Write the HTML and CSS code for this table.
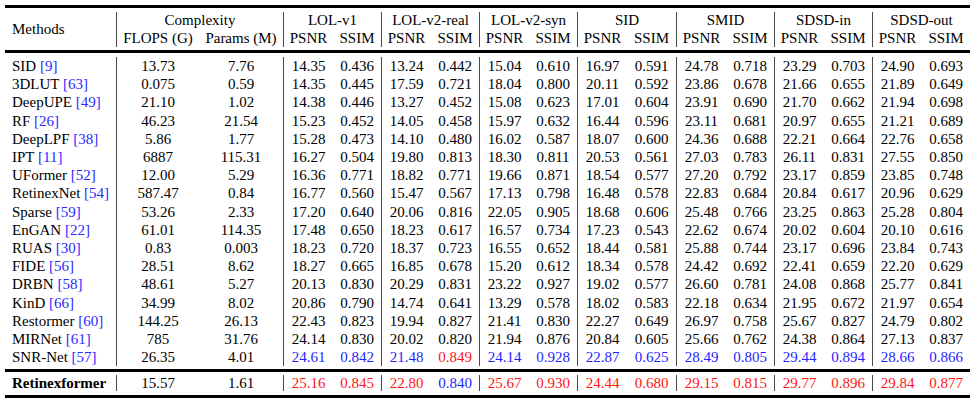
FILE: index.html
```html
<!DOCTYPE html>
<html>
<head>
<meta charset="utf-8">
<link rel="stylesheet" href="styles.css">
</head>
<body>
<table class="tbl">
<colgroup>
<col class="w-m"><col class="w-f"><col class="w-p">
<col class="w-a"><col class="w-b">
<col class="w-a"><col class="w-b">
<col class="w-a"><col class="w-b">
<col class="w-a"><col class="w-b1">
<col class="w-a"><col class="w-b">
<col class="w-a"><col class="w-b">
<col class="w-a"><col class="w-b">
</colgroup>
<tbody>
<tr class="rule"><td colspan="17"></td></tr>
<tr class="gap4"><td colspan="17"></td></tr>
<tr class="hd"><td class="m" rowspan="2">Methods</td><td class="v" colspan="2">Complexity</td><td class="v" colspan="2">LOL-v1</td><td class="v" colspan="2">LOL-v2-real</td><td class="v" colspan="2">LOL-v2-syn</td><td class="v" colspan="2">SID</td><td class="v" colspan="2">SMID</td><td class="v" colspan="2">SDSD-in</td><td class="v" colspan="2">SDSD-out</td></tr>
<tr class="hd"><td class="v">FLOPS (G)</td><td>Params (M)</td><td class="v">PSNR</td><td>SSIM</td><td class="v">PSNR</td><td>SSIM</td><td class="v">PSNR</td><td>SSIM</td><td class="v">PSNR</td><td>SSIM</td><td class="v">PSNR</td><td>SSIM</td><td class="v">PSNR</td><td>SSIM</td><td class="v">PSNR</td><td>SSIM</td></tr>
<tr class="gap3"><td colspan="17"></td></tr>
<tr class="rule"><td colspan="17"></td></tr>
<tr class="gap4"><td colspan="17"></td></tr>
<tr class="row"><td class="m">SID <span class="c">[9]</span></td><td class="v">13.73</td><td>7.76</td><td class="v">14.35</td><td>0.436</td><td class="v">13.24</td><td>0.442</td><td class="v">15.04</td><td>0.610</td><td class="v">16.97</td><td>0.591</td><td class="v">24.78</td><td>0.718</td><td class="v">23.29</td><td>0.703</td><td class="v">24.90</td><td>0.693</td></tr>
<tr class="row"><td class="m">3DLUT <span class="c">[63]</span></td><td class="v">0.075</td><td>0.59</td><td class="v">14.35</td><td>0.445</td><td class="v">17.59</td><td>0.721</td><td class="v">18.04</td><td>0.800</td><td class="v">20.11</td><td>0.592</td><td class="v">23.86</td><td>0.678</td><td class="v">21.66</td><td>0.655</td><td class="v">21.89</td><td>0.649</td></tr>
<tr class="row"><td class="m">DeepUPE <span class="c">[49]</span></td><td class="v">21.10</td><td>1.02</td><td class="v">14.38</td><td>0.446</td><td class="v">13.27</td><td>0.452</td><td class="v">15.08</td><td>0.623</td><td class="v">17.01</td><td>0.604</td><td class="v">23.91</td><td>0.690</td><td class="v">21.70</td><td>0.662</td><td class="v">21.94</td><td>0.698</td></tr>
<tr class="row"><td class="m">RF <span class="c">[26]</span></td><td class="v">46.23</td><td>21.54</td><td class="v">15.23</td><td>0.452</td><td class="v">14.05</td><td>0.458</td><td class="v">15.97</td><td>0.632</td><td class="v">16.44</td><td>0.596</td><td class="v">23.11</td><td>0.681</td><td class="v">20.97</td><td>0.655</td><td class="v">21.21</td><td>0.689</td></tr>
<tr class="row"><td class="m">DeepLPF <span class="c">[38]</span></td><td class="v">5.86</td><td>1.77</td><td class="v">15.28</td><td>0.473</td><td class="v">14.10</td><td>0.480</td><td class="v">16.02</td><td>0.587</td><td class="v">18.07</td><td>0.600</td><td class="v">24.36</td><td>0.688</td><td class="v">22.21</td><td>0.664</td><td class="v">22.76</td><td>0.658</td></tr>
<tr class="row"><td class="m">IPT <span class="c">[11]</span></td><td class="v">6887</td><td>115.31</td><td class="v">16.27</td><td>0.504</td><td class="v">19.80</td><td>0.813</td><td class="v">18.30</td><td>0.811</td><td class="v">20.53</td><td>0.561</td><td class="v">27.03</td><td>0.783</td><td class="v">26.11</td><td>0.831</td><td class="v">27.55</td><td>0.850</td></tr>
<tr class="row"><td class="m">UFormer <span class="c">[52]</span></td><td class="v">12.00</td><td>5.29</td><td class="v">16.36</td><td>0.771</td><td class="v">18.82</td><td>0.771</td><td class="v">19.66</td><td>0.871</td><td class="v">18.54</td><td>0.577</td><td class="v">27.20</td><td>0.792</td><td class="v">23.17</td><td>0.859</td><td class="v">23.85</td><td>0.748</td></tr>
<tr class="row"><td class="m">RetinexNet <span class="c">[54]</span></td><td class="v">587.47</td><td>0.84</td><td class="v">16.77</td><td>0.560</td><td class="v">15.47</td><td>0.567</td><td class="v">17.13</td><td>0.798</td><td class="v">16.48</td><td>0.578</td><td class="v">22.83</td><td>0.684</td><td class="v">20.84</td><td>0.617</td><td class="v">20.96</td><td>0.629</td></tr>
<tr class="row"><td class="m">Sparse <span class="c">[59]</span></td><td class="v">53.26</td><td>2.33</td><td class="v">17.20</td><td>0.640</td><td class="v">20.06</td><td>0.816</td><td class="v">22.05</td><td>0.905</td><td class="v">18.68</td><td>0.606</td><td class="v">25.48</td><td>0.766</td><td class="v">23.25</td><td>0.863</td><td class="v">25.28</td><td>0.804</td></tr>
<tr class="row"><td class="m">EnGAN <span class="c">[22]</span></td><td class="v">61.01</td><td>114.35</td><td class="v">17.48</td><td>0.650</td><td class="v">18.23</td><td>0.617</td><td class="v">16.57</td><td>0.734</td><td class="v">17.23</td><td>0.543</td><td class="v">22.62</td><td>0.674</td><td class="v">20.02</td><td>0.604</td><td class="v">20.10</td><td>0.616</td></tr>
<tr class="row"><td class="m">RUAS <span class="c">[30]</span></td><td class="v">0.83</td><td>0.003</td><td class="v">18.23</td><td>0.720</td><td class="v">18.37</td><td>0.723</td><td class="v">16.55</td><td>0.652</td><td class="v">18.44</td><td>0.581</td><td class="v">25.88</td><td>0.744</td><td class="v">23.17</td><td>0.696</td><td class="v">23.84</td><td>0.743</td></tr>
<tr class="row"><td class="m">FIDE <span class="c">[56]</span></td><td class="v">28.51</td><td>8.62</td><td class="v">18.27</td><td>0.665</td><td class="v">16.85</td><td>0.678</td><td class="v">15.20</td><td>0.612</td><td class="v">18.34</td><td>0.578</td><td class="v">24.42</td><td>0.692</td><td class="v">22.41</td><td>0.659</td><td class="v">22.20</td><td>0.629</td></tr>
<tr class="row"><td class="m">DRBN <span class="c">[58]</span></td><td class="v">48.61</td><td>5.27</td><td class="v">20.13</td><td>0.830</td><td class="v">20.29</td><td>0.831</td><td class="v">23.22</td><td>0.927</td><td class="v">19.02</td><td>0.577</td><td class="v">26.60</td><td>0.781</td><td class="v">24.08</td><td>0.868</td><td class="v">25.77</td><td>0.841</td></tr>
<tr class="row"><td class="m">KinD <span class="c">[66]</span></td><td class="v">34.99</td><td>8.02</td><td class="v">20.86</td><td>0.790</td><td class="v">14.74</td><td>0.641</td><td class="v">13.29</td><td>0.578</td><td class="v">18.02</td><td>0.583</td><td class="v">22.18</td><td>0.634</td><td class="v">21.95</td><td>0.672</td><td class="v">21.97</td><td>0.654</td></tr>
<tr class="row"><td class="m">Restormer <span class="c">[60]</span></td><td class="v">144.25</td><td>26.13</td><td class="v">22.43</td><td>0.823</td><td class="v">19.94</td><td>0.827</td><td class="v">21.41</td><td>0.830</td><td class="v">22.27</td><td>0.649</td><td class="v">26.97</td><td>0.758</td><td class="v">25.67</td><td>0.827</td><td class="v">24.79</td><td>0.802</td></tr>
<tr class="row"><td class="m">MIRNet <span class="c">[61]</span></td><td class="v">785</td><td>31.76</td><td class="v">24.14</td><td>0.830</td><td class="v">20.02</td><td>0.820</td><td class="v">21.94</td><td>0.876</td><td class="v">20.84</td><td>0.605</td><td class="v">25.66</td><td>0.762</td><td class="v">24.38</td><td>0.864</td><td class="v">27.13</td><td>0.837</td></tr>
<tr class="row"><td class="m">SNR-Net <span class="c">[57]</span></td><td class="v">26.35</td><td>4.01</td><td class="v b">24.61</td><td class="b">0.842</td><td class="v b">21.48</td><td class="r">0.849</td><td class="v b">24.14</td><td class="b">0.928</td><td class="v b">22.87</td><td class="b">0.625</td><td class="v b">28.49</td><td class="b">0.805</td><td class="v b">29.44</td><td class="b">0.894</td><td class="v b">28.66</td><td class="b">0.866</td></tr>
<tr class="gap3"><td colspan="17"></td></tr>
<tr class="rule"><td colspan="17"></td></tr>
<tr class="gap3"><td colspan="17"></td></tr>
<tr class="last"><td class="m bold">Retinexformer</td><td class="v">15.57</td><td>1.61</td><td class="v r">25.16</td><td class="r">0.845</td><td class="v r">22.80</td><td class="b">0.840</td><td class="v r">25.67</td><td class="r">0.930</td><td class="v r">24.44</td><td class="r">0.680</td><td class="v r">29.15</td><td class="r">0.815</td><td class="v r">29.77</td><td class="r">0.896</td><td class="v r">29.84</td><td class="r">0.877</td></tr>
<tr class="gap4"><td colspan="17"></td></tr>
<tr class="rule"><td colspan="17"></td></tr>
</tbody>
</table>
</body>
</html>
```
FILE: styles.css
```css
html, body {
  margin: 0;
  padding: 0;
  background: #ffffff;
}

.tbl {
  margin: 5px 0 0 5px;
  width: 965px;
  table-layout: fixed;
  border-collapse: separate;
  border-spacing: 0;
  font-family: "Liberation Serif", "Times New Roman", serif;
  font-size: 15px;
  color: #000000;
}

.w-m { width: 111px; }
.w-f { width: 83px; }
.w-p { width: 84px; }
.w-a { width: 50px; }
.w-b { width: 48px; }
.w-b1 { width: 49px; }

.tbl td {
  padding: 0;
  text-align: center;
  white-space: nowrap;
  vertical-align: middle;
}

.tbl td.m {
  text-align: left;
  padding-left: 7px;
}

.tbl td.v {
  border-left: 1px solid #4a4a4a;
}

.rule td {
  height: 3px;
  background: #000000;
  font-size: 0;
  line-height: 0;
}

.gap4 td {
  height: 4px;
  font-size: 0;
  line-height: 0;
}

.gap3 td {
  height: 3px;
  font-size: 0;
  line-height: 0;
}

.hd td {
  height: 17.5px;
  line-height: 17.5px;
}

.row td {
  height: 18.2px;
  line-height: 18.2px;
}

.last td {
  height: 16px;
  line-height: 16px;
}

.c { color: #2a2aff; }
.b { color: #1f1fff; }
.r { color: #ff1515; }
.bold { font-weight: bold; }
```
